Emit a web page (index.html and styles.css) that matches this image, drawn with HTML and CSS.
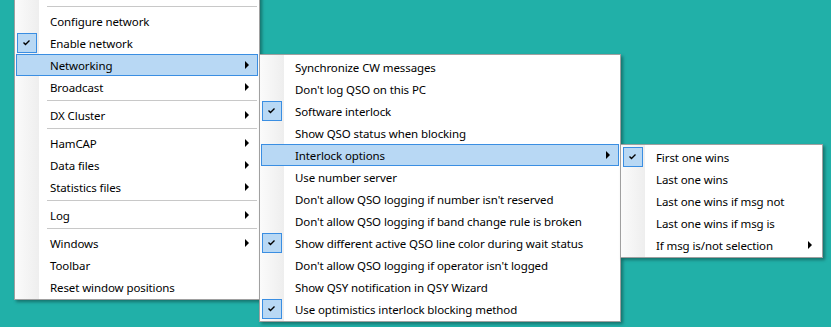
FILE: index.html
```html
<!DOCTYPE html>
<html lang="en">
<head>
    <meta charset="UTF-8">
    <title>Networking menu</title>
    <link rel="stylesheet" href="styles.css">
</head>
<body>
    <div class="desktop">
        <div class="menu menu-main">
            <div class="sep"></div>
            <div class="item"><span class="check"></span><span class="label">Configure network</span></div>
            <div class="item checked"><span class="check"><svg viewBox="0 0 18 18"><path d="M5.5 8.5l2 2 4-4"/></svg></span><span class="label">Enable network</span></div>
            <div class="item active"><span class="check"></span><span class="label">Networking</span><span class="arrow"></span></div>
            <div class="item"><span class="check"></span><span class="label">Broadcast</span><span class="arrow"></span></div>
            <div class="sep"></div>
            <div class="item"><span class="check"></span><span class="label">DX Cluster</span><span class="arrow"></span></div>
            <div class="sep"></div>
            <div class="item"><span class="check"></span><span class="label">HamCAP</span><span class="arrow"></span></div>
            <div class="item"><span class="check"></span><span class="label">Data files</span><span class="arrow"></span></div>
            <div class="item"><span class="check"></span><span class="label">Statistics files</span><span class="arrow"></span></div>
            <div class="sep"></div>
            <div class="item"><span class="check"></span><span class="label">Log</span><span class="arrow"></span></div>
            <div class="sep"></div>
            <div class="item"><span class="check"></span><span class="label">Windows</span><span class="arrow"></span></div>
            <div class="item"><span class="check"></span><span class="label">Toolbar</span></div>
            <div class="item"><span class="check"></span><span class="label">Reset window positions</span></div>
        </div>

        <div class="menu menu-net">
            <div class="item"><span class="check"></span><span class="label">Synchronize CW messages</span></div>
            <div class="item"><span class="check"></span><span class="label">Don't log QSO on this PC</span></div>
            <div class="item checked"><span class="check"><svg viewBox="0 0 18 18"><path d="M5.5 8.5l2 2 4-4"/></svg></span><span class="label">Software interlock</span></div>
            <div class="item"><span class="check"></span><span class="label">Show QSO status when blocking</span></div>
            <div class="item active"><span class="check"></span><span class="label">Interlock options</span><span class="arrow"></span></div>
            <div class="item"><span class="check"></span><span class="label">Use number server</span></div>
            <div class="item"><span class="check"></span><span class="label">Don't allow QSO logging if number isn't reserved</span></div>
            <div class="item"><span class="check"></span><span class="label">Don't allow QSO logging if band change rule is broken</span></div>
            <div class="item checked"><span class="check"><svg viewBox="0 0 18 18"><path d="M5.5 8.5l2 2 4-4"/></svg></span><span class="label">Show different active QSO line color during wait status</span></div>
            <div class="item"><span class="check"></span><span class="label">Don't allow QSO logging if operator isn't logged</span></div>
            <div class="item"><span class="check"></span><span class="label">Show QSY notification in QSY Wizard</span></div>
            <div class="item checked"><span class="check"><svg viewBox="0 0 18 18"><path d="M5.5 8.5l2 2 4-4"/></svg></span><span class="label">Use optimistics interlock blocking method</span></div>
        </div>

        <div class="menu menu-lock">
            <div class="item checked"><span class="check"><svg viewBox="0 0 18 18"><path d="M5.5 8.5l2 2 4-4"/></svg></span><span class="label">First one wins</span></div>
            <div class="item"><span class="check"></span><span class="label">Last one wins</span></div>
            <div class="item"><span class="check"></span><span class="label">Last one wins if msg not</span></div>
            <div class="item"><span class="check"></span><span class="label">Last one wins if msg is</span></div>
            <div class="item"><span class="check"></span><span class="label">If msg is/not selection</span><span class="arrow"></span></div>
        </div>
    </div>
</body>
</html>
```

FILE: styles.css
```css
:root {
    --teal: #21b0a8;
    --hl-fill: #b8d8f4;
    --hl-border: #3a8ee2;
    --menu-border: #a0a0a0;
}
* { box-sizing: border-box; margin: 0; padding: 0; }
body {
    font-family: 'Noto Sans', 'Open Sans', sans-serif;
    font-size: 11.5px;
    letter-spacing: -0.1px;
    color: #000;
    background: var(--teal);
    overflow: hidden;
}
.desktop {
    position: relative;
    width: 831px;
    height: 327px;
}
.menu {
    position: absolute;
    background: #fff linear-gradient(to right, #fbfbfb, #eeeeee) no-repeat 0 0 / 24px 100%;
    border: 1px solid var(--menu-border);
    padding: 1px 0;
    box-shadow: 2px 2px 3px rgba(0, 0, 0, 0.35);
}
.menu-main { left: 14px; top: -20px; width: 246px; padding-top: 23px; }
.menu-net  { left: 259px; top: 54px; width: 362px; }
.menu-lock { left: 620px; top: 144px; width: 203px; }
.item {
    display: flex;
    align-items: center;
    height: 22px;
    margin: 0 1px;
    border: 1px solid transparent;
    white-space: nowrap;
}
.item.active {
    background: var(--hl-fill);
    border-color: var(--hl-border);
}
.check {
    flex: none;
    width: 20px;
    height: 20px;
    display: flex;
    align-items: center;
    justify-content: center;
    border: 1px solid transparent;
}
.checked .check {
    background: var(--hl-fill);
    border-color: var(--hl-border);
}
.check svg {
    width: 18px;
    height: 18px;
    fill: none;
    stroke: #000;
    stroke-width: 1.4;
}
.label {
    margin-left: 13px;
    padding-top: 1px;
    line-height: 20px;
}
.arrow {
    margin-left: auto;
    margin-right: 8px;
    width: 0;
    height: 0;
    border-style: solid;
    border-width: 4px 0 4px 4px;
    border-color: transparent transparent transparent #000;
}
.sep {
    height: 1px;
    background: #c8c8c8;
    margin: 2px 2px 3px 32px;
}
```
